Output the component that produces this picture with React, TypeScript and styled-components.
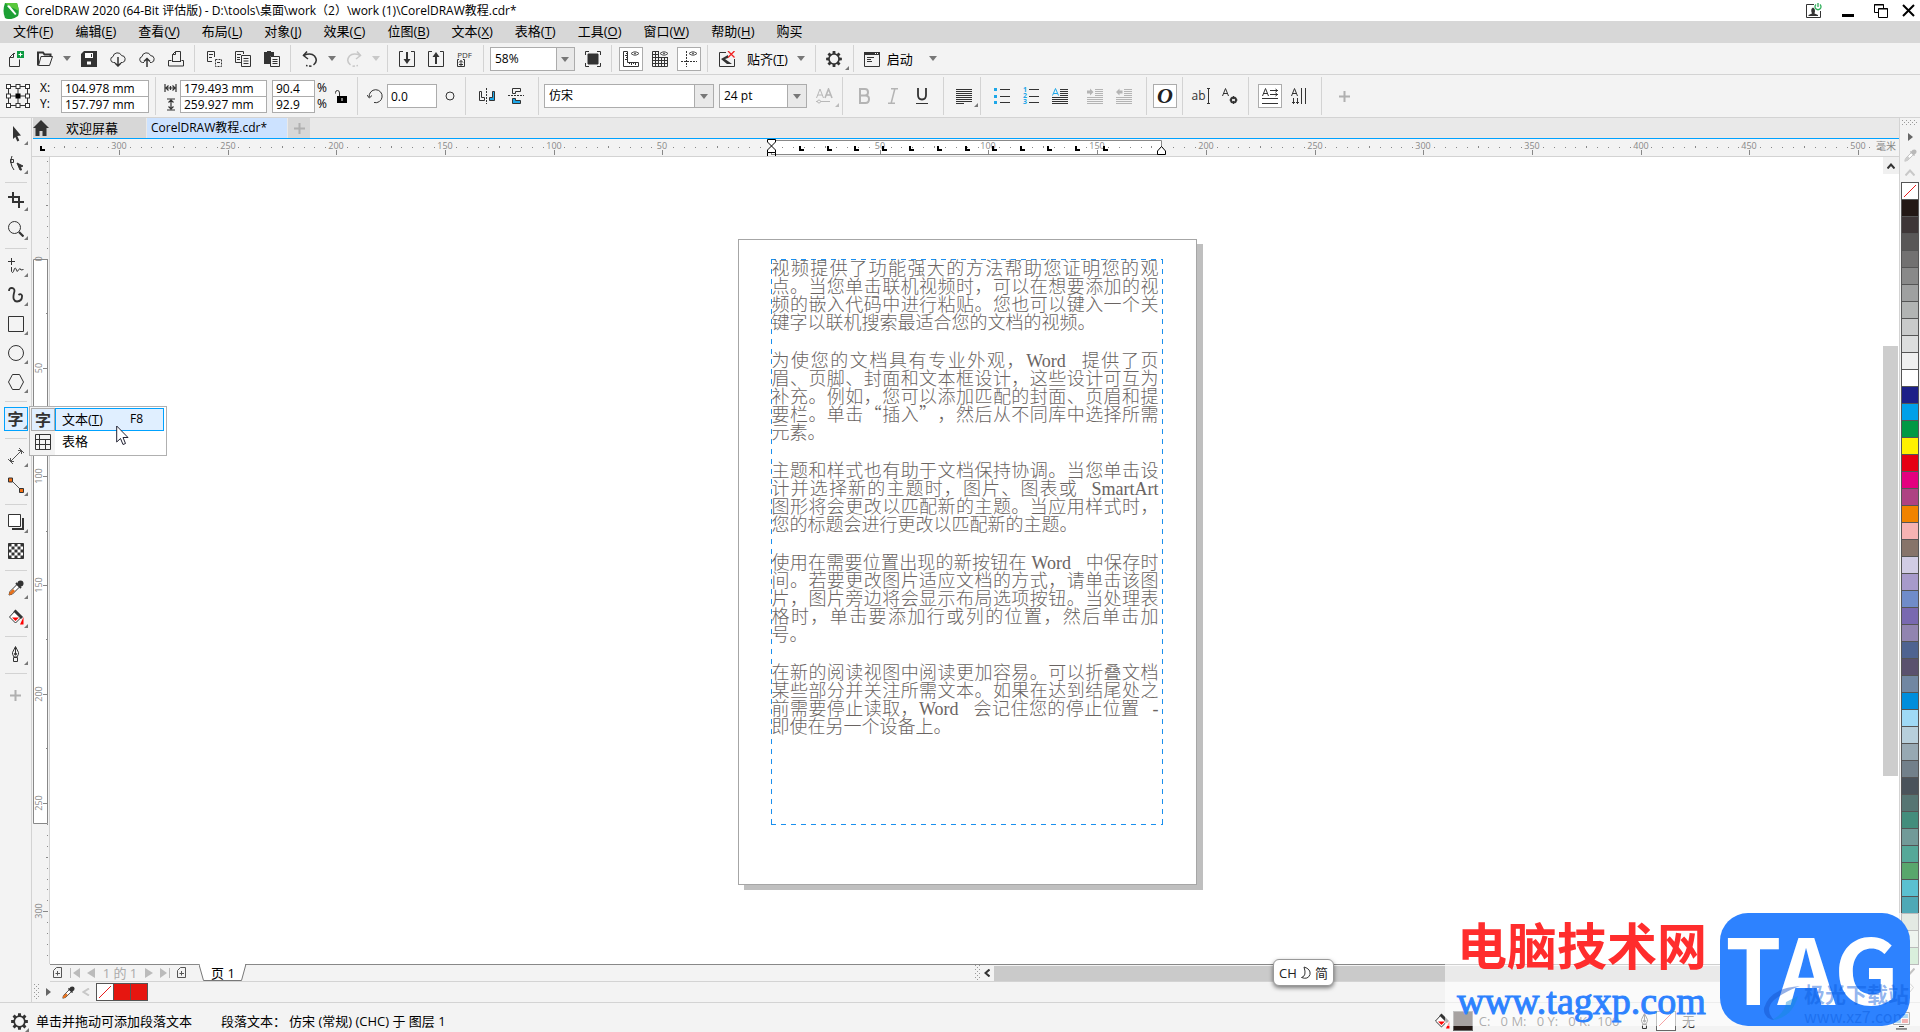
import React from "react";
import styled, { createGlobalStyle, css } from "styled-components";

const UI_FONT = `"Open Sans", "Noto Sans CJK SC", sans-serif`;
const INK = "#333333";
const BLUE = "#00a2ff";
const LINE = "#d3d3d3";
const BAR = "#f3f3f3";

const Global = createGlobalStyle`
  * { box-sizing: border-box; }
  body { margin: 0; background: #fff; }
  button, input, select { font: inherit; color: inherit; margin: 0; }
`;

/* ---------- shell ---------- */

const Shell = styled.div`
  position: relative;
  display: flex;
  flex-direction: column;
  min-height: 100vh;
  overflow: hidden;
  font-family: ${UI_FONT};
  font-size: 13px;
  line-height: 18px;
  color: #000;
  background: ${BAR};
`;

const TitleBar = styled.header`
  display: flex;
  align-items: center;
  height: 21px;
  padding: 0 5px 0 3px;
  background: #fff;
`;
const TitleText = styled.h1`
  flex: 1;
  margin: 0 0 0 5px;
  font-size: 12px;
  font-weight: 400;
  white-space: nowrap;
`;
const WindowButtons = styled.div<{ $gap: number }>`
  display: flex;
  gap: ${(p) => p.$gap}px;
  align-items: center;
`;
const BareButton = styled.button`
  display: flex;
  align-items: center;
  justify-content: center;
  padding: 0;
  border: 0;
  background: none;
`;

const MenuBar = styled.nav`
  display: flex;
  align-items: center;
  height: 22px;
  padding: 0 0 2px 2px;
  background: #d7d7d7;
`;
const MenuItem = styled.button`
  padding: 0 11px;
  border: 0;
  background: none;
  white-space: nowrap;
  u { text-underline-offset: 2px; }
`;

const Bar = styled.div<{ $tall?: boolean }>`
  display: flex;
  align-items: center;
  height: ${(p) => (p.$tall ? 43 : 32)}px;
  padding-left: ${(p) => (p.$tall ? 6 : 1)}px;
  border-bottom: 1px solid ${LINE};
  background: ${BAR};
  & > * { flex-shrink: 0; }
`;
const Sep = styled.span<{ $l?: number; $r?: number }>`
  align-self: stretch;
  width: 1px;
  margin: 2px ${(p) => p.$r ?? 4}px 2px ${(p) => p.$l ?? 4}px;
  background: ${LINE};
`;
const Gap = styled.span<{ $w: number }>`
  width: ${(p) => p.$w}px;
`;
const Tool = styled.button<{ $w?: number; $on?: boolean }>`
  position: relative;
  display: flex;
  align-items: center;
  justify-content: center;
  width: ${(p) => p.$w ?? 29}px;
  height: 24px;
  padding: 0;
  border: 0;
  background: none;
  ${(p) =>
    p.$on &&
    css`
      width: 24px;
      margin: 0 2px 0 3px;
      border: 1px solid #acacac;
      background: #fff;
    `}
`;
const ItalicMark = styled.span`
  font-family: "Liberation Serif", serif;
  font-size: 22px;
  font-style: italic;
  font-weight: 700;
  line-height: 20px;
  color: #222;
`;
const SmallMark = styled.span`
  font-size: 12px;
  line-height: 16px;
  color: ${INK};
`;
const PdfMark = styled.span`
  display: flex;
  flex-direction: column;
  align-items: flex-start;
  font-size: 8px;
  line-height: 8px;
  color: ${INK};
`;
const NumberMarks = styled.span`
  display: flex;
  flex-direction: column;
  width: 5px;
  font-size: 7px;
  font-weight: 700;
  line-height: 6px;
  color: #1da7e8;
`;
const TextTool = styled.button<{ $pad?: number }>`
  padding: 0 ${(p) => p.$pad ?? 0}px;
  border: 0;
  background: none;
  white-space: nowrap;
`;
const CaretBox = styled.button`
  display: flex;
  justify-content: center;
  width: 15px;
  padding: 0;
  border: 0;
  background: none;
`;

const Combo = styled.div<{ $w: number; $arrow: number }>`
  display: flex;
  position: relative;
  width: ${(p) => p.$w}px;
  height: 24px;
  border: 1px solid #acacac;
  background: linear-gradient(#acacac, #acacac) right ${(p) => p.$arrow}px top / 1px 100% no-repeat,
    linear-gradient(#e9e9e9, #e9e9e9) right top / ${(p) => p.$arrow}px 100% no-repeat, #fff;
  select {
    flex: 1;
    width: 100%;
    padding: 0 0 0 4px;
    border: 0;
    appearance: none;
    background: none;
    font-size: 12px;
  }
  svg {
    position: absolute;
    right: 5px;
    top: 9px;
    pointer-events: none;
  }
`;

const Labels = styled.div<{ $w: number; $l?: number }>`
  display: flex;
  flex-direction: column;
  width: ${(p) => p.$w}px;
  padding-left: ${(p) => p.$l ?? 0}px;
  font-size: 12px;
  line-height: 16px;
  label, span { height: 16px; display: flex; align-items: center; }
`;
const Pair = styled.div<{ $w: number }>`
  display: flex;
  flex-direction: column;
  width: ${(p) => p.$w}px;
  border: 1px solid #acacac;
  background: #fff;
  input + input { border-top: 1px solid #acacac; height: 16px; }
`;
const Field = styled.input<{ $boxed?: number }>`
  width: ${(p) => (p.$boxed ? `${p.$boxed}px` : "100%")};
  height: ${(p) => (p.$boxed ? 24 : 15)}px;
  padding: 0 0 0 3px;
  border: ${(p) => (p.$boxed ? "1px solid #acacac" : "0")};
  background: #fff;
  font-size: 12px;
  line-height: 14px;
`;

/* ---------- work area ---------- */

const Body = styled.div`
  display: flex;
  flex: 1;
  min-height: 0;
`;
const Toolbox = styled.aside`
  display: flex;
  flex-direction: column;
  align-items: center;
  width: 32px;
  padding-top: 2px;
  border-right: 1px solid ${LINE};
`;
const ToolSep = styled.span`
  width: 22px;
  height: 1px;
  margin: 4px 0 3px;
  background: ${LINE};
`;
const AddTool = styled.div`
  padding-top: 4px;
`;
const SideTool = styled.button<{ $on?: boolean }>`
  position: relative;
  display: flex;
  align-items: center;
  justify-content: center;
  width: 24px;
  height: 24px;
  margin: 2px 0 3px;
  padding: 0;
  border: ${(p) => (p.$on ? `1px solid ${BLUE}` : "0")};
  background: ${(p) => (p.$on ? "#e0efff" : "none")};
`;
const Flag = styled.i<{ $faint?: boolean }>`
  position: absolute;
  right: 0;
  bottom: 1px;
  border: 2px solid transparent;
  border-right-color: ${(p) => (p.$faint ? "#bbb" : "#777")};
  border-bottom-color: ${(p) => (p.$faint ? "#bbb" : "#777")};
`;
const Glyph = styled.span`
  padding-bottom: 2px;
  font-family: "Noto Sans CJK SC", sans-serif;
  font-size: 16px;
  font-weight: 700;
  line-height: 18px;
  color: ${INK};
`;

const Center = styled.main`
  display: flex;
  flex: 1;
  flex-direction: column;
  min-width: 0;
`;
const Tabs = styled.div`
  display: flex;
  height: 21px;
  margin-left: 1px;
  border-bottom: 1px solid ${BLUE};
  background: #e9e9e9;
`;
const Tab = styled.button<{ $active?: boolean; $w: number }>`
  display: flex;
  align-items: center;
  gap: 17px;
  width: ${(p) => p.$w}px;
  padding: 0 0 0 ${(p) => (p.$active ? 4 : 0)}px;
  border: 0;
  border-right: 1px solid #e9e9e9;
  background: ${(p) => (p.$active ? "#cce2ff" : "#d7d7d7")};
  font-size: ${(p) => (p.$active ? 12 : 13)}px;
  white-space: nowrap;
`;
const NewTab = styled.button`
  display: flex;
  align-items: center;
  justify-content: center;
  width: 22px;
  padding: 0;
  border: 0;
  background: #d7d7d7;
`;
const RulerRow = styled.div`
  display: flex;
  height: 18px;
  border-bottom: 1px solid ${LINE};
  svg { width: 100%; height: 17px; display: block; }
`;
const Work = styled.div`
  display: flex;
  flex: 1;
  min-height: 0;
`;
const RulerCol = styled.div`
  width: 18px;
  border-right: 1px solid ${LINE};
  overflow: hidden;
  svg { width: 17px; height: 100%; display: block; }
`;
const Canvas = styled.section`
  display: flex;
  flex: 1;
  align-items: center;
  justify-content: center;
  padding: 2px 0 0 1px;
  background: #fff;
`;
const Sheet = styled.article`
  width: 459px;
  height: 646px;
  padding: 19px 0 0 32px;
  border: 1px solid #a6a6a6;
  background: #fff;
  box-shadow: 6px 5px 0 #bfbfbf;
`;
const dash = (dir: string) => `repeating-linear-gradient(${dir}, #1a8fee 0 5px, transparent 5px 10px)`;
const Frame = styled.div`
  display: flow-root;
  width: 392px;
  height: 566px;
  padding: 0 4px 0 1px;
  background: ${dash("to right")} left top / 100% 1px no-repeat,
    ${dash("to right")} left bottom / 100% 1px no-repeat,
    ${dash("to bottom")} left top / 1px 100% no-repeat,
    ${dash("to bottom")} right top / 1px 100% no-repeat;
`;
const Para = styled.p`
  margin: -1px 0 21px;
  font-family: "Noto Sans CJK SC", sans-serif;
  font-size: 18px;
  font-weight: 300;
  line-height: 18px;
  color: #6a6462;
  text-spacing-trim: space-all;
`;
const Line = styled.span`
  display: block;
  height: 18px;
  white-space: nowrap;
  text-align: justify;
  text-align-last: justify;
  &:last-child { text-align-last: left; }
`;
const Latin = styled.span<{ $after?: boolean; $before?: boolean }>`
  margin: 0 ${(p) => (p.$after ? 10 : 0)}px 0 ${(p) => (p.$before ? 8 : 0)}px;
  font-family: "Liberation Serif", serif;
  font-weight: 400;
  line-height: 1px;
`;

const VScroll = styled.div`
  display: flex;
  flex-direction: column;
  width: 16px;
  background: #fff;
`;
const ScrollEnd = styled.button`
  display: flex;
  align-items: center;
  justify-content: center;
  width: 16px;
  height: 17px;
  padding: 0;
  border: 0;
  background: #f0f0f0;
`;
const VThumb = styled.div`
  width: 15px;
  height: 430px;
  margin: 172px 0 auto;
  background: #cdcdcd;
`;

const PageBar = styled.div`
  display: flex;
  height: 18px;
  margin-left: 18px;
  border-top: 1px solid #888;
  border-bottom: 1px solid ${LINE};
  color: #aaa;
`;
const PageNav = styled.div`
  display: flex;
  align-items: center;
  justify-content: space-between;
  width: 149px;
  padding: 0 12px 1px 3px;
`;
const PageTab = styled.button`
  position: relative;
  width: 48px;
  height: 17px;
  margin-top: -1px;
  padding: 0;
  border: 0;
  background: none;
  color: #000;
  svg { position: absolute; left: 0; top: 0; }
  span { position: relative; display: block; line-height: 14px; }
`;
const HScroll = styled.div`
  display: flex;
  align-items: center;
  width: 50%;
  margin-left: auto;
`;
const HThumb = styled.div`
  flex: 1;
  height: 15px;
  background: #cacaca;
`;
const DocPalette = styled.div`
  display: flex;
  align-items: center;
  height: 20px;
  padding-left: 2px;
`;
const DocSwatches = styled.div`
  display: flex;
`;
const DocSwatch = styled.button<{ $c: string }>`
  display: flex;
  width: 18px;
  height: 18px;
  margin-left: -1px;
  padding: 0;
  border: 1px solid #555;
  background: ${(p) => p.$c};
`;

const PaletteDock = styled.aside`
  display: flex;
  flex-direction: column;
  align-items: center;
  width: 21px;
  border-left: 1px solid ${LINE};
`;
const PaletteHead = styled.div`
  display: flex;
  flex-direction: column;
  align-items: center;
  justify-content: space-between;
  height: 64px;
  padding: 2px 0 6px;
`;
const Swatches = styled.div`
  display: flex;
  flex-direction: column;
  width: 18px;
  border: solid #555;
  border-width: 0 1px 1px;
`;
const Swatch = styled.button<{ $c: string }>`
  display: block;
  width: 16px;
  height: 17px;
  padding: 0;
  border: 0;
  border-top: 1px solid #555;
  background: ${(p) => p.$c};
`;
const PaletteFoot = styled.div`
  display: flex;
  flex-direction: column;
  gap: 8px;
  padding-top: 3px;
`;

const StatusBar = styled.footer`
  display: flex;
  align-items: center;
  height: 30px;
  padding: 7px 9px 0;
  border-top: 1px solid ${LINE};
`;
const StatusText = styled.span<{ $l?: number }>`
  margin-left: ${(p) => p.$l ?? 0}px;
  white-space: nowrap;
`;
const StatusRight = styled.div`
  display: flex;
  align-items: center;
  width: 477px;
  margin-left: auto;
`;
const FillChip = styled.span<{ $c: string }>`
  display: flex;
  width: 20px;
  height: 20px;
  margin: 0 6px 0 3px;
  border: 1px solid #666;
  background: ${(p) => p.$c};
`;
const Quiet = styled.span<{ $w: number }>`
  width: ${(p) => p.$w}px;
  color: #333;
  white-space: nowrap;
`;

/* ---------- overlays ---------- */

const Flyout = styled.div`
  position: absolute;
  left: 29px;
  top: 406px;
  display: grid;
  grid-template-rows: 23px 22px;
  width: 138px;
  height: 50px;
  padding: 1px 1px 2px;
  border: 1px solid #b0b0b0;
  background: linear-gradient(${BAR}, ${BAR}) left top / 25px 100% no-repeat, #fff;
`;
const FlyItem = styled.button`
  display: flex;
  align-items: stretch;
  padding: 0 1px 0 0;
  border: 0;
  background: none;
  text-align: left;
`;
const FlyIcon = styled.span<{ $on?: boolean }>`
  display: flex;
  align-items: center;
  justify-content: center;
  width: 24px;
  border: 1px solid ${(p) => (p.$on ? "#acacac" : "transparent")};
  background: ${(p) => (p.$on ? "#e0efff" : "none")};
`;
const FlyLabel = styled.span<{ $on?: boolean }>`
  display: flex;
  flex: 1;
  align-items: center;
  justify-content: space-between;
  padding: 0 20px 2px 6px;
  border: 1px solid ${(p) => (p.$on ? BLUE : "transparent")};
  background: ${(p) => (p.$on ? "#e0efff" : "none")};
  kbd { font-family: inherit; font-size: 12px; }
`;
const Cursor = styled.svg`
  position: absolute;
  left: 116px;
  top: 425px;
`;
const ImeBadge = styled.div`
  position: absolute;
  right: 586px;
  bottom: 46px;
  display: flex;
  align-items: center;
  justify-content: center;
  gap: 3px;
  width: 61px;
  height: 27px;
  border: 1px solid #999;
  border-radius: 6px;
  background: #fff;
  box-shadow: 0 2px 4px rgba(0, 0, 0, 0.5);
  color: #222;
`;
const Brand = styled.div`
  position: absolute;
  right: 0;
  bottom: 6px;
  display: flex;
  justify-content: space-between;
  width: 475px;
  height: 113px;
  padding: 0 10px 0 12px;
  background: rgba(255, 255, 255, 0.6);
`;
const BrandWords = styled.div`
  display: flex;
  flex-direction: column;
  padding-top: 3px;
`;
const BrandName = styled.strong`
  font-family: "Noto Sans CJK SC", sans-serif;
  font-size: 50px;
  line-height: 54px;
  color: #ff2d2d;
  white-space: nowrap;
`;
const BrandUrl = styled.a`
  margin-top: 9px;
  font-family: "Liberation Serif", serif;
  font-size: 38px;
  line-height: 44px;
  color: #2d82ff;
  -webkit-text-stroke: 1px #2d82ff;
  text-decoration: none;
`;
const BrandTile = styled.div`
  position: relative;
  width: 190px;
  height: 113px;
  padding-right: 6px;
  border-radius: 28px;
  background: #2d82ff;
  overflow: hidden;
  color: #fff;
  text-align: center;
  font-family: "Noto Sans CJK SC", sans-serif;
  font-size: 90px;
  font-weight: 700;
  line-height: 106px;
`;
const Ghost = styled.div`
  position: absolute;
  right: 1px;
  bottom: 0;
  display: grid;
  grid-template-columns: 42px auto;
  align-items: center;
  font-size: 21px;
  font-weight: 700;
  line-height: 26px;
  color: rgba(10, 90, 220, 0.45);
  text-align: left;
  small { display: block; font-size: 16px; font-weight: 400; line-height: 20px; }
`;

/* ---------- drawings ---------- */

type IconProps = { children?: React.ReactNode; s?: number; w?: number; h?: number; c?: string; sw?: number };
const Ic = ({ children, s = 16, w, h, c = INK, sw = 1 }: IconProps) => (
  <svg width={w ?? s} height={h ?? s} viewBox={`0 0 ${w ?? s} ${h ?? s}`} fill="none" stroke={c} strokeWidth={sw} aria-hidden="true">
    {children}
  </svg>
);
const Caret = ({ c = "#777" }: { c?: string }) => (
  <Ic w={8} h={5} c="none"><path d="M0 0H8L4 5Z" fill={c} /></Ic>
);
const DropCaret = ({ c, label }: { c?: string; label: string }) => (
  <CaretBox aria-label={label}><Caret c={c} /></CaretBox>
);
const gearPath = (() => {
  const pts: string[] = [];
  for (let i = 0; i < 8; i++) {
    const a = (i * Math.PI) / 4;
    [[-0.26, 5.8], [-0.17, 8], [0.17, 8], [0.26, 5.8]].forEach(([d, r]) => {
      pts.push(`${(8 + r * Math.cos(a + d)).toFixed(2)} ${(8 + r * Math.sin(a + d)).toFixed(2)}`);
    });
  }
  return `M${pts.join("L")}Z M12.2 8A4.2 4.2 0 1 0 3.8 8A4.2 4.2 0 1 0 12.2 8Z`;
})();
const Gear = ({ s = 16 }: { s?: number }) => (
  <svg width={s} height={s} viewBox="0 0 16 16" aria-hidden="true"><path d={gearPath} fill={INK} fillRule="evenodd" /></svg>
);
const cloud = "M5 11.5H3.5A3 3 0 0 1 3 5.6A4.5 4.5 0 0 1 11.6 4.6A3.5 3.5 0 0 1 12.5 11.5H11";
const Eye = () => (
  <>
    <path d="M8 2.5Q12 -1 16 2.5Q12 6 8 2.5Z" stroke="#555" />
    <circle cx="12" cy="2.5" r="1" fill="#555" stroke="none" />
  </>
);
const rows = (ys: number[], x1 = 0, x2 = 16) => ys.map((y) => `M${x1} ${y}.5H${x2}`).join("");
const Dropper = ({ c = INK, tip = "#e8701a", s = 16 }: { c?: string; tip?: string; s?: number }) => (
  <svg width={s} height={s} viewBox="0 0 16 16" fill="none" stroke={c} aria-hidden="true">
    <path d="M9 4.5L2 11.5L1 15L4.5 14L11.5 7" fill="#fff" />
    <path d="M5 9L1.5 12.5L1 15L3.5 14.5L7 11Z" fill={tip} stroke="none" />
    <path d="M8 3L13 8" strokeWidth="2" />
    <circle cx="12.5" cy="3.5" r="3" fill={c} stroke="none" />
  </svg>
);
const Bucket = () => (
  <Ic>
    <path d="M7.5 1.5L1.5 8L7.5 14L13.5 8Z" fill="#fff" />
    <path d="M6.5 1.500L14 9" strokeWidth="3" />
    <path d="M4 8.5H11L7.5 12Z" fill="#f00" stroke="none" />
    <path d="M15.5 8V15.5H12Z" fill="#f00" stroke="none" />
  </Ic>
);
const Nib = () => (
  <Ic>
    <path d="M7.5 .5L4.5 6.5Q4 8 6 11H9Q11 8 10.5 6.5ZM7.5 1V7.5M5.5 11.5H9.5V15.5H5.5Z" />
    <circle cx="7.5" cy="8" r="1" fill={INK} />
  </Ic>
);
const NoneMark = () => (
  <Ic c="#e81c1c"><path d="M2 14L14 2" /></Ic>
);
const Grip = ({ vertical }: { vertical?: boolean }) => (
  <Ic w={vertical ? 6 : 16} h={vertical ? 16 : 6} c="none">
    {Array.from({ length: 12 }, (_, i) => {
      const a = (i % 4) * 4 + (Math.floor(i / 4) % 2) * 2;
      const b = Math.floor(i / 4) * 2;
      return <rect key={i} x={vertical ? b : a} y={vertical ? a : b} width="1" height="1" fill="#999" />;
    })}
  </Ic>
);
const PlusIcon = () => <Ic s={13} c="#b0b0b0" sw={2}><path d="M6.5 1V12M1 6.5H12" /></Ic>;

const I: Record<string, React.ReactNode> = {
  new: <Ic><path d="M7 2.5H5.5L1.5 6.5V15.5H11.5V8.5M5.5 2.5V6.5H1.5" /><path d="M9 0h7v7h-7Z" fill="#0b9a40" stroke="none" /><path d="M12.5 1.5V5.5M10.5 3.5H14.5" stroke="#fff" /></Ic>,
  open: <Ic><path d="M1 14.5V1.5H6L7.5 3.5H13.5V6" strokeWidth="2" /><path d="M4 5.5H15.5L12.5 14.5H1.5Z" fill={BAR} /></Ic>,
  save: <Ic><path d="M3 0H16V16H0V3Z" fill={INK} stroke="none" /><path d="M4 2H12V7H4ZM6 10.5H10V13.5H6Z" fill="#fff" stroke="none" /><path d="M10.5 3V6" /></Ic>,
  cloudDown: <Ic><path d={cloud} /><path d="M8 6V15M5 12L8 15L11 12" strokeWidth="1.5" /></Ic>,
  cloudUp: <Ic><path d={cloud} /><path d="M8 16V8M5 10.5L8 7.5L11 10.5" strokeWidth="1.5" /></Ic>,
  print: <Ic><path d="M4.5 10V3.5L7.500 .5H12.5V10M3.5 9.5H.5V15H15.5V9.5H13.500M4 10.500H13M7.500 .5V3.500H4.500" /></Ic>,
  cut: <Ic><path d="M6 10.5H1.5V.5H8.5V6M3 3.5H7M3 6.5H6" /><path d="M9.5 8.5H15.5V15.5H9.5Z" strokeDasharray="2 1" /><path d="M11 11.5H14" /></Ic>,
  copy: <Ic><path d="M6 11.5H.5V.5H8.5V3M2 3.5H6M2 6.5H5M2 8.5H5" /><path d="M6.5 4.5H15.5V15.5H6.5ZM8.5 7.5H13.5M8.5 10H13.5M8.5 12.5H13.5" /></Ic>,
  paste: <Ic><path d="M0 1H3V0H7V1H10V5H6V13H0Z" fill={INK} stroke="none" /><path d="M6.5 5.5H15.5V15.5H6.5ZM8.5 8.5H13.5M8.5 10.5H13.5M8.5 12.5H13.5" /></Ic>,
  undo: <Ic sw={1.5}><path d="M1.500 4.500Q9 1.500 12.500 5Q16.500 10 11.500 14" /><path d="M9.500 15.200L4 14.500" strokeDasharray="2.500 1.500" /><path d="M5 .5L1.500 4.500L6 8" /></Ic>,
  redo: <Ic sw={1.5} c="#c8c8c8"><path d="M14.500 4.500Q7 1.500 3.500 5Q-.5 10 4.500 14" /><path d="M6.500 15.200L12 14.500" strokeDasharray="2.500 1.500" /><path d="M11 .5L14.500 4.500L10 8" /></Ic>,
  import: <Ic><path d="M4 .5H.5V15.5H15.5V.5H12" /><path d="M8 1V11" strokeWidth="2" /><path d="M4.5 8H11.5L8 13Z" fill={INK} stroke="none" /></Ic>,
  export: <Ic><path d="M4 .5H.5V15.5H15.5V.5H12" /><path d="M8 4V13" strokeWidth="2" /><path d="M4.5 6H11.5L8 1Z" fill={INK} stroke="none" /></Ic>,
  full: <Ic><path d="M3 3H13V13H3Z" fill={INK} /><path d="M.5 4V.5H4M12 .5H15.5V4M15.5 12V15.5H12M4 15.5H.5V12" /></Ic>,
  ruler: <Ic><path d="M.5 .5H4.5V11.5H15.5V15.5H.5ZM3 2.5H4.5M2 4.5H4.5M3 6.5H4.5M2 8.5H4.5M6.5 13V11.5M8.5 14V11.5M10.5 13V11.5M12.5 14V11.5" /><Eye /></Ic>,
  grid: <Ic><path d="M.5 .5V15.5M3.5 .5V15.5M6.5 .5V15.5M9.5 6V15.5M12.5 6V15.5M15.5 6V15.5M.5 .5H7M.5 3.5H7M.5 6.5H15.5M.5 9.5H15.5M.5 12.5H15.5M.5 15.5H15.5" /><Eye /></Ic>,
  guide: <Ic><path d="M5.5 0V16M0 10.5H16" strokeDasharray="2 1" /><Eye /></Ic>,
  snapOff: <Ic><path d="M7 1.5H.5V15.5H15.5V8" /><path d="M2 8L9 4V7L6 8L13 13H8Z" fill={INK} stroke="none" /><path d="M9 0L15.5 6.5M15.5 0L9 6.5" stroke="#f02020" strokeWidth="1.3" /></Ic>,
  launch: <Ic><path d="M.5 1.5H15.5V15.5H.5ZM3 6.5H10M3 8.5H7M3 10.5H8" /><path d="M0 1H16V4H0Z" fill={INK} stroke="none" /><path d="M11 2.5H12M13 2.5H14" stroke="#fff" /></Ic>,
  origin: <Ic s={24}><path d="M4 2.5H20M4 12H20M4 21.5H20M2.5 4V20M12 4V20M21.5 4V20" />{[2.5, 12, 21.5].map((x) => [2.5, 12, 21.5].map((y) => <rect key={`${x}${y}`} x={x - 2} y={y - 2} width="4" height="4" fill={x === 12 && y === 12 ? "#000" : "#fff"} stroke={x === 12 && y === 12 ? "#000" : INK} />))}</Ic>,
  width: <Ic w={13} h={8} sw={1.2}><path d="M1 0V8M12 0V8M2 4H11M4.5 1.5L2 4L4.5 6.5M8.5 1.5L11 4L8.5 6.5M6.5 2V6" /></Ic>,
  height: <Ic w={8} h={13} sw={1.2}><path d="M0 1H8M0 12H8M4 2V11M1.5 4.5L4 2L6.5 4.5M1.5 8.5L4 11L6.5 8.5" /></Ic>,
  lock: <Ic w={12} h={13}><path d="M.5 3.500V2.500Q.5 .5 2.5 .5Q4.5 .5 4.5 3V6" /><path d="M2 6H12V13H2Z" fill="#000" stroke="none" /><path d="M7 8V11" stroke="#fff" /></Ic>,
  rotate: <Ic><path d="M2.2 9A6.500 6.500 0 1 1 7 14.5" /><path d="M0 7L2.3 10L5 7.5" /></Ic>,
  degree: <Ic s={10}><circle cx="5" cy="5" r="4" /></Ic>,
  mirrorH: <Ic><path d="M.5 3.5H2.5V9.5H5.5V12.5H.5Z" /><path d="M7.5 0V16" strokeDasharray="2 1" /><path d="M15.5 3.5H13.5V9.5H10.5V12.5H15.5Z" fill="#1da7e8" /></Ic>,
  mirrorV: <Ic><path d="M12.5 .5H4.5V5.5H7.5V3.5H12.5Z" /><path d="M0 7.5H16" strokeDasharray="2 1" /><path d="M12.5 15.5H4.5V10.5H7.5V12.5H12.5Z" fill="#1da7e8" /></Ic>,
  align: <Ic><path d={rows([1, 3, 5, 7, 9, 11, 13]) + "M0 15.5H8"} /></Ic>,
  bullets: <Ic><path d="M6 1.5H16M6 8.5H16M6 14.5H16" /><path d="M0 0H3V3H0ZM0 7H3V10H0ZM0 13H3V16H0Z" fill="#1da7e8" stroke="none" /></Ic>,
  dropcap: <Ic><path d={rows([1, 3, 5, 7], 8) + rows([9, 11, 13, 15])} /><path d="M.5 7.5L3.5 .5L6.5 7.5M1.5 5.5H5.5" stroke="#1da7e8" /></Ic>,
  indent: <Ic c="#b4b4b4"><path d={rows([1, 3, 5, 7], 8) + rows([9, 11, 13, 15])} /><path d="M0 2.5H3V.5L6.5 4L3 7.5V5.5H0Z" fill="#b4b4b4" stroke="none" /></Ic>,
  outdent: <Ic c="#b4b4b4"><path d={rows([1, 3, 5, 7], 8) + rows([9, 11, 13, 15])} /><path d="M6.5 2.5H3.5V.5L0 4L3.5 7.5V5.5H6.5Z" fill="#b4b4b4" stroke="none" /></Ic>,
  horiz: <Ic><path d="M.5 8L3.5 .5L6.5 8M1.5 5.5H5.5M8 2.5H16M8 6.5H16M0 10.5H16M0 15.5H16M13.5 1L15.5 2.5L13.5 4M13.5 5L15.5 6.5L13.5 8" /></Ic>,
  vert: <Ic><path d="M.5 8L3.5 .5L6.5 8M1.5 5.5H5.5M10.5 0V16M14.5 0V16M2.5 10V16M6.5 10V16M1 14L2.5 15.5L4 14M5 14L6.5 15.5L8 14" /></Ic>,

  pick: <Ic><path d="M5 0L13 9.5L9.3 10L11.3 14.5L9.3 15.5L7.3 11L5 13Z" fill={INK} stroke="none" /></Ic>,
  shape: <Ic><path d="M4 1Q1 8 6 15M2.5 4.5H5.5V7.5H2.5Z" /><path d="M9 8L15 11L12.5 12L13.5 15L12 15Z" fill={INK} /></Ic>,
  crop: <Ic sw={2}><path d="M0 5H11V16M5 0V10H16" /></Ic>,
  zoom: <Ic><circle cx="6.5" cy="6.5" r="6" /><path d="M11 11L15.5 15.5" strokeWidth="2.2" /></Ic>,
  freehand: <Ic><path d="M3.5 0V7M0 3.5H7M3.5 9V13.5Q5 16 6 12Q7 8 8.5 12Q9 15 10.5 12Q12 9 13 12L15.5 11.5" /></Ic>,
  artistic: <Ic><path d="M1 4Q1 .8 4 1Q7.5 1.5 6 6Q4 14 9 14.5Q14.5 14 14 8.5Q12.5 6 10.5 8" strokeWidth="1.8" /></Ic>,
  rect: <Ic><path d="M.5 .5H15.5V15.5H.5Z" /></Ic>,
  ellipse: <Ic><circle cx="8" cy="8" r="7.5" /></Ic>,
  polygon: <Ic><path d="M4.5 .5H11.5L15.5 8L11.5 15.5H4.5L.5 8Z" /></Ic>,
  dim: <Ic><path d="M2.5 13.5L13.5 2.5M0 11L5 16M11 0L16 5M2.5 10V13.5H6M10 2.5H13.5V6" stroke="#555" /></Ic>,
  connector: <Ic><path d="M3 3L13 13" stroke="#555" /><path d="M.5 1H4.5V5H.5ZM11.5 11.5H15.5V15.5H11.5Z" fill="#f36f13" /></Ic>,
  shadow: <Ic><path d="M4 15H15V4" strokeWidth="2" /><path d="M.5 .5H12.5V12.5H.5Z" fill="#fff" /></Ic>,
  checker: <Ic><path d="M.5 .5H15.5V15.5H.5Z" fill="#fff" />{Array.from({ length: 25 }, (_, i) => i % 2 === 0 && <rect key={i} x={(i % 5) * 3 + 0.5} y={Math.floor(i / 5) * 3 + 0.5} width="3" height="3" fill={INK} stroke="none" />)}</Ic>,
  table: <Ic><path d="M.5 .5H15.5V15.5H.5ZM4.5 .5V15.5M.5 5.5H15.5M.5 10.5H15.5M10.5 5.5V15.5" /></Ic>,
};

/* ---------- rulers ---------- */

const STEP = 10.87;
const TopRuler = () => {
  const zero = 739;
  const marks = [];
  for (let i = -66; i <= 102; i++) {
    const x = Math.round(zero + i * STEP);
    if (x < 18) continue;
    const major = i % 10 === 0;
    marks.push(
      major ? (
        <React.Fragment key={i}>
          <rect x={x} y="11" width="1" height="5" fill="#888" />
          {i !== 0 && <text x={x} y="10" textAnchor="middle" fontSize="9" fill="#888">{Math.abs(i * 5)}</text>}
        </React.Fragment>
      ) : (
        <rect key={i} x={x} y={i % 5 === 0 ? 7 : 8} width="1" height={i % 5 === 0 ? 2 : 1} fill="#888" />
      )
    );
  }
  return (
    <svg aria-hidden="true">
      <path d="M739 1.5H1129.5V15.5H739" fill="#fff" stroke="#888" />
      {marks}
      {Array.from({ length: 12 }, (_, i) => (
        <path key={i} d={`M${Math.round(768 + i * 27.6)} 7V11H${Math.round(768 + i * 27.6) + 4}`} fill="none" stroke="#000" strokeWidth="2" />
      ))}
      <path d="M9 7V11H13" fill="none" stroke="#000" strokeWidth="2" />
      <path d="M735.5 .5H743.5V3L735.5 11V13.5H743.5V11L735.5 3ZM735.5 13.5V17M743.5 13.5V17" fill="#fff" stroke="#000" />
      <path d="M1125.5 15.5V12L1129.5 7.5L1133.5 12V15.5Z" fill="#fff" stroke="#000" />
      <text x="1844" y="11" fontSize="10" fill="#888">毫米</text>
    </svg>
  );
};
const SideRuler = () => {
  const zero = 102;
  const marks = [];
  for (let i = -9; i <= 65; i++) {
    const y = Math.round(zero + i * STEP);
    const inside = i > 0 && i < 52;
    if (i % 10 === 0) {
      marks.push(
        <React.Fragment key={i}>
          <rect x="11" y={y} width="5" height="1" fill="#888" />
          <text transform={`translate(10 ${y}) rotate(-90)`} textAnchor="middle" fontSize="9" fill="#888">{Math.abs(i * 5)}</text>
        </React.Fragment>
      );
    } else if (!inside || i % 5 === 0) {
      marks.push(<rect key={i} x={i % 5 === 0 ? 14 : 15} y={y} width={i % 5 === 0 ? 2 : 1} height="1" fill="#888" />);
    }
  }
  return (
    <svg aria-hidden="true">
      <path d="M1.5 102.5H15.5V666.5H1.5Z" fill="#fff" stroke="#888" />
      {marks}
    </svg>
  );
};

/* ---------- data ---------- */

const MENUS: [string, string][] = [
  ["文件", "F"], ["编辑", "E"], ["查看", "V"], ["布局", "L"], ["对象", "J"], ["效果", "C"], ["位图", "B"],
  ["文本", "X"], ["表格", "T"], ["工具", "O"], ["窗口", "W"], ["帮助", "H"], ["购买", ""],
];

const COLORS = [
  "#fff", "#231815", "#3e3637", "#595757", "#727171", "#898989", "#9fa0a0", "#b2b4b3", "#c9caca", "#dcdddd", "#efefef", "#ffffff",
  "#1d2088", "#00a0e9", "#009944", "#fff100", "#e60012", "#e4007f", "#ae4283", "#f08300", "#f5b2b2", "#87746a", "#d1cce4",
  "#a79acb", "#708cc9", "#7969b0", "#9184b0", "#4f6390", "#5a516e", "#7187a2", "#008edc", "#9fdaf6", "#b7cfdb", "#97a9b3",
  "#72808a", "#4a535b", "#567573", "#438d7c", "#729a98", "#55a898", "#59a76c", "#5bc0d0", "#4fa9b6", "#b9cab9", "#d4e3d6", "#a0d7a8",
];

const TOOL_GROUPS: [string, string][][] = [
  [["pick", "选择"], ["shape", "形状"]],
  [["crop", "裁剪"], ["zoom", "缩放"]],
  [["freehand", "手绘"], ["artistic", "艺术笔"], ["rect", "矩形"], ["ellipse", "椭圆形"], ["polygon", "多边形"]],
  [["text", "文本"]],
  [["dim", "平行度量"], ["connector", "连接器"]],
  [["shadow", "阴影"], ["checker", "透明度"]],
  [["dropper", "颜色滴管"], ["bucket", "交互式填充"]],
  [["nib", "轮廓笔"]],
];

const drawTool = (id: string) => {
  if (id === "text") return <Glyph>字</Glyph>;
  if (id === "dropper") return <Dropper />;
  if (id === "bucket") return <Bucket />;
  if (id === "nib") return <Nib />;
  return I[id];
};

const PARAGRAPHS: React.ReactNode[][] = [
  ["视频提供了功能强大的方法帮助您证明您的观", "点。当您单击联机视频时，可以在想要添加的视", "频的嵌入代码中进行粘贴。您也可以键入一个关", "键字以联机搜索最适合您的文档的视频。"],
  [<>为使您的文档具有专业外观，<Latin $after>Word </Latin>提供了页</>, "眉、页脚、封面和文本框设计，这些设计可互为", "补充。例如，您可以添加匹配的封面、页眉和提", "要栏。单击“插入”，然后从不同库中选择所需", "元素。"],
  ["主题和样式也有助于文档保持协调。当您单击设", <>计并选择新的主题时，图片、图表或<Latin $before> SmartArt</Latin></>, "图形将会更改以匹配新的主题。当应用样式时，", "您的标题会进行更改以匹配新的主题。"],
  [<>使用在需要位置出现的新按钮在<Latin $after> Word </Latin>中保存时</>, "间。若要更改图片适应文档的方式，请单击该图", "片，图片旁边将会显示布局选项按钮。当处理表", "格时，单击要添加行或列的位置，然后单击加", "号。"],
  ["在新的阅读视图中阅读更加容易。可以折叠文档", "某些部分并关注所需文本。如果在达到结尾处之", <>前需要停止读取，<Latin $after>Word </Latin>会记住您的停止位置<Latin $before> -</Latin></>, "即使在另一个设备上。"],
];

/* ---------- regions ---------- */

const B = ({ id, label, on, w }: { id: string; label: string; on?: boolean; w?: number }) => (
  <Tool aria-label={label} aria-pressed={on} $on={on} $w={w}>{I[id]}</Tool>
);

const StandardBar = () => (
  <Bar role="toolbar" aria-label="标准">
    <B id="new" label="新建" /><B id="open" label="打开" /><DropCaret label="最近的文档" />
    <B id="save" label="保存" /><B id="cloudDown" label="从云中打开" /><B id="cloudUp" label="保存到云" /><B id="print" label="打印" />
    <Sep />
    <B id="cut" label="剪切" /><B id="copy" label="复制" /><B id="paste" label="粘贴" />
    <Sep />
    <B id="undo" label="撤消" /><DropCaret label="撤消列表" /><B id="redo" label="重做" /><DropCaret label="重做列表" c="#c8c8c8" />
    <Sep />
    <B id="import" label="导入" /><B id="export" label="导出" />
    <Tool aria-label="发布为 PDF">
      <PdfMark>
        PDF
        <Ic w={8} h={8}><path d="M2 .5H.5V7.5H7.5V.5H6M4 7.5V1.5M2 3.5L4 1.5L6 3.5M2 5.5H6" /></Ic>
      </PdfMark>
    </Tool>
    <Sep $r={6} />
    <Combo $w={85} $arrow={17}><select aria-label="缩放级别"><option>58%</option></select><Caret /></Combo>
    <Gap $w={3} />
    <B id="full" label="全屏预览" />
    <Sep />
    <B id="ruler" label="标尺" on /><B id="grid" label="网格" /><B id="guide" label="辅助线" on />
    <Sep />
    <B id="snapOff" label="关闭贴齐" />
    <TextTool $pad={6}>贴齐(<u>T</u>)</TextTool><DropCaret label="贴齐选项" />
    <Sep $l={6} />
    <Tool aria-label="选项"><Gear /><Flag /></Tool>
    <Sep />
    <B id="launch" label="应用程序启动器" /><TextTool>启动</TextTool><Gap $w={13} /><DropCaret label="启动列表" />
  </Bar>
);

const PropertyBar = () => (
  <Bar $tall role="toolbar" aria-label="属性栏">
    {I.origin}
    <Gap $w={10} />
    <Labels $w={21}><label htmlFor="px">X:</label><label htmlFor="py">Y:</label></Labels>
    <Pair $w={88}><Field id="px" defaultValue="104.978 mm" /><Field id="py" defaultValue="157.797 mm" /></Pair>
    <Sep $l={6} $r={6} />
    <Labels $w={18} $l={2}><span>{I.width}</span><span><Gap $w={3} />{I.height}</span></Labels>
    <Pair $w={87}><Field aria-label="宽度" defaultValue="179.493 mm" /><Field aria-label="高度" defaultValue="259.927 mm" /></Pair>
    <Gap $w={5} />
    <Pair $w={43}><Field aria-label="水平缩放" defaultValue="90.4" /><Field aria-label="垂直缩放" defaultValue="92.9" /></Pair>
    <Labels $w={13} $l={2}><span>%</span><span>%</span></Labels>
    <B id="lock" label="锁定比率" w={25} />
    <Sep $l={4} $r={4} />
    <B id="rotate" label="旋转" w={25} />
    <Field $boxed={50} aria-label="旋转角度" defaultValue="0.0" />
    <B id="degree" label="度" w={25} />
    <Sep $l={3} $r={6} />
    <B id="mirrorH" label="水平镜像" /><B id="mirrorV" label="垂直镜像" />
    <Sep $l={8} $r={5} />
    <Combo $w={170} $arrow={18}><select aria-label="字体"><option>仿宋</option></select><Caret /></Combo>
    <Gap $w={5} />
    <Combo $w={88} $arrow={18}><select aria-label="字体大小"><option>24 pt</option></select><Caret /></Combo>
    <Gap $w={3} />
    <Tool aria-label="可变字体">
      <Ic w={18} c="#b8b8b8"><path d="M.5 10L4 1L7.5 10M2 7H6M0 13.5H14" /><path d="M9 10L12.5 1L16 10M10.5 7H14.5" strokeWidth="1.6" /><circle cx="3" cy="13.5" r="1.5" fill={BAR} /></Ic>
      <Flag $faint />
    </Tool>
    <Sep $l={3} $r={6} />
    <Tool aria-label="粗体"><Ic c="#b4b4b4" sw={2}><path d="M4 1H9Q12 1 12 4.3Q12 7.5 9 7.5H4ZM4 7.5H9.5Q13 7.5 13 11Q13 15 9.5 15H4V1" /></Ic></Tool>
    <Tool aria-label="斜体"><Ic c="#b4b4b4" sw={1.5}><path d="M6 .8H13M3 15.2H10M9.8 1L6.2 15" /></Ic></Tool>
    <Tool aria-label="下划线"><Ic><path d="M4 0V7Q4 11.5 8 11.5Q12 11.5 12 7V0" strokeWidth="1.8" /><path d="M2 15.5H14" /></Ic></Tool>
    <Sep $l={7} $r={5} />
    <Tool aria-label="文本对齐">{I.align}<Flag /></Tool>
    <Sep $l={2} $r={6} />
    <B id="bullets" label="项目符号列表" />
    <Tool aria-label="编号列表">
      <NumberMarks><span>1</span><span>2</span><span>3</span></NumberMarks>
      <Ic w={11}><path d="M1 1.5H11M1 8.5H11M1 14.5H11" /></Ic>
    </Tool>
    <B id="dropcap" label="首字下沉" />
    <Gap $w={6} />
    <B id="indent" label="增加缩进" /><B id="outdent" label="减少缩进" />
    <Sep $l={8} $r={3} />
    <Tool $on aria-pressed aria-label="OpenType"><ItalicMark>O</ItalicMark></Tool>
    <Sep $l={3} $r={3} />
    <Tool aria-label="编辑文本"><SmallMark>ab</SmallMark><Ic w={4}><path d="M2.5 1V15M1 .5H4M1 15.5H4" /></Ic></Tool>
    <Tool aria-label="文本属性"><Ic><path d="M.5 8L3.5 .5L6.5 8M1.5 5.5H5.5" /><circle cx="11.5" cy="12" r="2.5" strokeWidth="2" /><path d="M11.5 8V16M7.5 12H9M14 12H15.5" /><circle cx="11.5" cy="12" r="1" fill={BAR} stroke="none" /></Ic></Tool>
    <Sep $l={4} $r={6} />
    <B id="horiz" label="将文本更改为水平方向" on /><B id="vert" label="将文本更改为垂直方向" />
    <Sep $l={8} $r={8} />
    <Tool aria-label="快速自定义"><PlusIcon /></Tool>
  </Bar>
);

const AddPage = () => (
  <Ic w={10} h={11} c="#555"><path d="M3.5 .5H8.5V10.5H.5V3.5ZM4.5 4V8.5M2.5 6.5H7" /></Ic>
);

const PageStrip = () => (
  <PageBar>
    <PageNav>
      <BareButton aria-label="在前面添加页"><AddPage /></BareButton>
      <BareButton aria-label="第一页"><Ic w={10} h={10} c="#bbb"><path d="M.5 0V10" /><path d="M10 0V10L3 5Z" fill="#bbb" stroke="none" /></Ic></BareButton>
      <BareButton aria-label="上一页"><Ic w={8} h={10} c="none"><path d="M8 0V10L0 5Z" fill="#bbb" /></Ic></BareButton>
      <span>1 的 1</span>
      <BareButton aria-label="下一页"><Ic w={8} h={10} c="none"><path d="M0 0V10L8 5Z" fill="#bbb" /></Ic></BareButton>
      <BareButton aria-label="最后一页"><Ic w={10} h={10} c="#bbb"><path d="M9.5 0V10" /><path d="M0 0V10L7 5Z" fill="#bbb" stroke="none" /></Ic></BareButton>
      <BareButton aria-label="在后面添加页"><AddPage /></BareButton>
    </PageNav>
    <PageTab>
      <svg width="48" height="17" viewBox="0 0 48 17" aria-hidden="true"><path d="M0 0H47L42.5 16.5H4.5L0 .5" fill="#fff" stroke="#777" /><path d="M1 0H46" stroke="#fff" strokeWidth="2" /></svg>
      <span>页 1</span>
    </PageTab>
    <HScroll>
      <Grip vertical />
      <Gap $w={3} />
      <BareButton aria-label="向左滚动"><Ic w={6} h={8} sw={2}><path d="M5.5 .5L1.5 4L5.5 7.5" /></Ic></BareButton>
      <Gap $w={4} />
      <HThumb />
      <BareButton aria-label="向右滚动"><Ic w={10} h={8} sw={2}><path d="M2 .5L6 4L2 7.5" /></Ic></BareButton>
      <BareButton aria-label="导航器"><Ic w={16} h={14} c="#777"><circle cx="7" cy="6" r="4.5" /><path d="M10 9L14 13M7 4V8M5 6H9" /></Ic></BareButton>
    </HScroll>
  </PageBar>
);

export default function App() {
  return (
    <Shell lang="zh-CN">
      <Global />
      <TitleBar>
        <svg width="17" height="16" viewBox="0 0 17 16" aria-hidden="true">
          <path d="M2 0H14Q17 8 15 13Q8 18 2 15Q-1 8 2 0Z" fill="#1da035" />
          <path d="M2 0H14L16 8L6 3Z" fill="#5ac83c" />
          <path d="M4 3L12 12L13.5 11L7 3Q5.5 1.5 4 3Z" fill="#fff" />
        </svg>
        <TitleText>CorelDRAW 2020 (64-Bit 评估版) - D:\tools\桌面\work（2）\work (1)\CorelDRAW教程.cdr*</TitleText>
        <WindowButtons $gap={20}>
          <BareButton aria-label="登录"><Ic><path d="M8 1.5H.5V14.5H14.5V8" /><path d="M2.5 13V12L6 10.5Q4 6 7 4.5Q10 6 8.5 10.5L12 12V13Z" fill={INK} stroke="none" /><path d="M10 1.5A3 3 0 1 0 14 1.5M12 0V4" stroke="#2fae5a" strokeWidth="1.3" /></Ic></BareButton>
          <BareButton aria-label="最小化"><Ic w={12} h={14} c="#000" sw={3}><path d="M0 11.5H12" /></Ic></BareButton>
          <WindowButtons $gap={14}>
            <BareButton aria-label="还原"><Ic w={14} h={14} c="#000"><path d="M.5 8.5V.5H9.5V4M.5 8.5H4M0 1H10M4.5 4.5H13.5V13.5H4.5ZM4 5H14" /></Ic></BareButton>
            <BareButton aria-label="关闭"><Ic s={13} c="#000" sw={2}><path d="M1 1L12 12M12 1L1 12" /></Ic></BareButton>
          </WindowButtons>
        </WindowButtons>
      </TitleBar>
      <MenuBar>
        {MENUS.map(([name, key]) => (
          <MenuItem key={name}>{name}{key && <>(<u>{key}</u>)</>}</MenuItem>
        ))}
      </MenuBar>
      <StandardBar />
      <PropertyBar />
      <Body>
        <Toolbox>
          {TOOL_GROUPS.map((group, g) => (
            <React.Fragment key={g}>
              {group.map(([id, label]) => (
                <SideTool key={id} aria-label={label} $on={id === "text"}>
                  {drawTool(id)}
                  {id !== "checker" && <Flag />}
                </SideTool>
              ))}
              <ToolSep />
            </React.Fragment>
          ))}
          <AddTool><SideTool aria-label="快速自定义"><PlusIcon /></SideTool></AddTool>
        </Toolbox>
        <Center>
          <Tabs>
            <Tab $w={114}>
              <Ic c="none"><path d="M8 0L16 8H13.5V16H9.5V11H6.5V16H2.5V8H0Z" fill={INK} /></Ic>
              欢迎屏幕
            </Tab>
            <Tab $w={141} $active>CorelDRAW教程.cdr*</Tab>
            <NewTab aria-label="新建文档"><PlusIcon /></NewTab>
          </Tabs>
          <RulerRow><TopRuler /></RulerRow>
          <Work>
            <RulerCol><SideRuler /></RulerCol>
            <Canvas>
              <Sheet>
                <Frame>
                  {PARAGRAPHS.map((lines, i) => (
                    <Para key={i}>{lines.map((line, j) => <Line key={j}>{line}</Line>)}</Para>
                  ))}
                </Frame>
              </Sheet>
            </Canvas>
            <VScroll>
              <ScrollEnd aria-label="向上滚动"><Ic w={8} h={6} sw={2}><path d="M.5 5.5L4 1.5L7.5 5.5" /></Ic></ScrollEnd>
              <VThumb />
              <ScrollEnd aria-label="向下滚动"><Ic w={8} h={6} sw={2}><path d="M.5 .5L4 4.5L7.5 .5" /></Ic></ScrollEnd>
            </VScroll>
          </Work>
          <PageStrip />
          <DocPalette>
            <Grip vertical />
            <Gap $w={6} />
            <BareButton aria-label="调色板菜单"><Ic w={5} h={8} c="none"><path d="M0 0L5 4L0 8Z" fill="#666" /></Ic></BareButton>
            <Gap $w={11} />
            <BareButton aria-label="滴管"><Dropper s={13} /></BareButton>
            <Gap $w={7} />
            <BareButton aria-label="向左"><Ic w={8} h={8} c="#c8c8c8" sw={2}><path d="M7 .5L1.5 4L7 7.5" /></Ic></BareButton>
            <Gap $w={7} />
            <DocSwatches>
              <DocSwatch $c="#fff" aria-label="无"><NoneMark /></DocSwatch>
              <DocSwatch $c="#e61610" aria-label="红" />
              <DocSwatch $c="#e61610" aria-label="红" />
            </DocSwatches>
          </DocPalette>
        </Center>
        <PaletteDock>
          <PaletteHead>
            <Grip />
            <BareButton aria-label="调色板菜单"><Ic w={5} h={8} c="none"><path d="M0 0L5 4L0 8Z" fill="#666" /></Ic></BareButton>
            <BareButton aria-label="滴管"><Dropper s={13} c="#b8b8b8" tip="#ccc" /></BareButton>
            <BareButton aria-label="向上"><Ic w={10} h={7} c="#c8c8c8" sw={2}><path d="M.5 6.5L5 1.5L9.5 6.5" /></Ic></BareButton>
          </PaletteHead>
          <Swatches>
            {COLORS.map((c, i) => <Swatch key={i} $c={c} aria-label={c}>{i === 0 && <NoneMark />}</Swatch>)}
          </Swatches>
          <PaletteFoot>
            <BareButton aria-label="向下"><Ic w={10} h={7} c="#666" sw={2}><path d="M.5 .5L5 5.5L9.5 .5" /></Ic></BareButton>
            <BareButton aria-label="更多"><Ic w={8} h={10} c="#999"><path d="M.5 .5L4 4.5L.5 9M4 .5L7.5 4.5L4 9" /></Ic></BareButton>
          </PaletteFoot>
        </PaletteDock>
      </Body>
      <StatusBar>
        <Tool $w={20} aria-label="状态栏选项"><Gear s={17} /><Flag /></Tool>
        <StatusText $l={7}>单击并拖动可添加段落文本</StatusText>
        <StatusText $l={29}>段落文本：</StatusText>
        <StatusText $l={3}>仿宋 (常规) (CHC) 于 图层 1</StatusText>
        <StatusRight>
          <Bucket />
          <FillChip $c="#231815" />
          <Quiet $w={159}>C:&nbsp; &nbsp;0 M:&nbsp; &nbsp;0 Y:&nbsp; &nbsp;0 K:&nbsp; 100</Quiet>
          <Nib />
          <FillChip $c="#fff"><NoneMark /></FillChip>
          <Quiet $w={212}>无</Quiet>
          <Ic w={18} h={18}><path d="M.5 .5H16.5V12.5H.5ZM6 14.5H11M3 17H14" /><path d="M2 2H8V6H2ZM9 7H15V11H9Z" fill="#e04040" stroke="none" /><path d="M9 2H15V6H9ZM2 7H8V11H2Z" fill="#3aa0e0" stroke="none" /></Ic>
        </StatusRight>
      </StatusBar>

      <Flyout role="menu">
        <FlyItem role="menuitem">
          <FlyIcon $on><Glyph>字</Glyph></FlyIcon>
          <FlyLabel $on><span>文本(<u>T</u>)</span><kbd>F8</kbd></FlyLabel>
        </FlyItem>
        <FlyItem role="menuitem">
          <FlyIcon>{I.table}</FlyIcon>
          <FlyLabel>表格</FlyLabel>
        </FlyItem>
      </Flyout>
      <Cursor width="13" height="21" viewBox="0 0 13 21" aria-hidden="true">
        <path d="M.7 1V17L4.5 13.5L7 19.5L9.5 18.5L7 12.5H12Z" fill="#fff" stroke="#223" />
      </Cursor>
      <ImeBadge>
        <span>CH</span>
        <Ic w={12} h={14} c="#333"><path d="M4 1Q11 3 10 8.5Q8 14 1.5 11.5Q7 10 4 1Z" /></Ic>
        <span>简</span>
      </ImeBadge>
      <Brand>
        <BrandWords>
          <BrandName>电脑技术网</BrandName>
          <BrandUrl href="#">www.tagxp.com</BrandUrl>
        </BrandWords>
        <BrandTile>
          TAG
          <Ghost>
            <Ic w={40} h={38} c="none"><path d="M38 2Q8 4 2 24Q1 34 12 36Q2 26 12 16Q22 8 38 2Z" fill="rgba(20,80,200,.45)" /><path d="M36 12Q30 34 10 36Q24 28 24 18Z" fill="rgba(20,140,220,.45)" /></Ic>
            <div>极光下载站<small>www.xz7.com</small></div>
          </Ghost>
        </BrandTile>
      </Brand>
    </Shell>
  );
}
